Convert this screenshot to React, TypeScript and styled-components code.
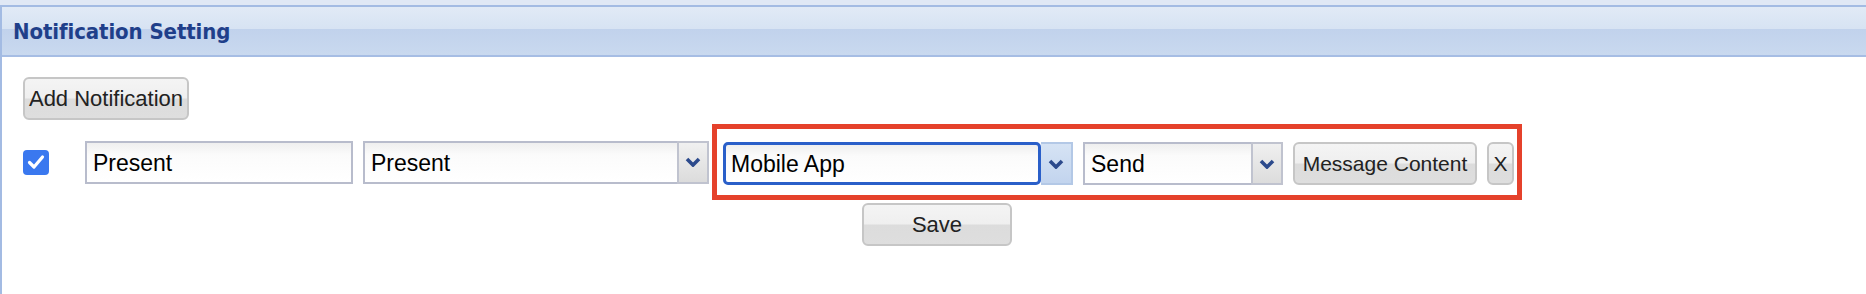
import React from "react";
import styled, { createGlobalStyle } from "styled-components";

const GlobalStyle = createGlobalStyle`
  html, body {
    margin: 0;
    padding: 0;
    background: #ffffff;
  }
  body {
    font-family: "Liberation Sans", Arial, sans-serif;
  }
`;

const Page = styled.div`
  width: 1866px;
  height: 294px;
  box-sizing: border-box;
  padding-top: 5px;
  background: #e0e8f5;
  overflow: hidden;
`;

const Panel = styled.div`
  height: 289px;
  box-sizing: border-box;
  border-top: 2px solid #a3bbe3;
  border-left: 2px solid #a3bbe3;
  background: #ffffff;
`;

const Header = styled.div`
  height: 50px;
  box-sizing: border-box;
  border-bottom: 2px solid #a6bde4;
  background: linear-gradient(
    to bottom,
    #e1eaf6 0%,
    #d7e3f3 45%,
    #c1d2ec 46%,
    #c9d9ef 100%
  );
  display: flex;
  align-items: center;
  padding-left: 11px;
`;

const Title = styled.h2`
  margin: 0;
  font-family: "DejaVu Sans Condensed", "DejaVu Sans", sans-serif;
  font-weight: bold;
  font-size: 22px;
  letter-spacing: -0.1px;
  color: #1f3f8a;
`;

const Body = styled.div`
  padding: 20px 0 0 21px;
  display: flex;
  flex-direction: column;
  align-items: flex-start;
`;

const Button = styled.button<{ $w?: number; $size?: number; $gap?: number }>`
  height: 43px;
  width: ${(p) => (p.$w ? `${p.$w}px` : "auto")};
  margin-left: ${(p) => p.$gap ?? 0}px;
  box-sizing: border-box;
  padding: 0;
  border: 2px solid #c6c6c6;
  border-radius: 6px;
  background: linear-gradient(to bottom, #f4f4f4 0%, #efefef 48%, #dcdcdc 52%, #dedede 100%);
  font-family: "Liberation Sans", Arial, sans-serif;
  font-size: ${(p) => p.$size ?? 21}px;
  color: #222222;
  cursor: pointer;
  white-space: nowrap;
`;

const Row = styled.div`
  margin-top: 4px;
  display: flex;
  align-items: center;
`;

const Check = styled.span`
  width: 26px;
  height: 25px;
  border-radius: 4px;
  background: #3a78ef;
  display: flex;
  align-items: center;
  justify-content: center;
  margin-right: 36px;
`;

const TextBox = styled.div<{ $w: number }>`
  width: ${(p) => p.$w}px;
  height: 43px;
  box-sizing: border-box;
  border: 2px solid #b8bccc;
  background: linear-gradient(to bottom, #efefef 0%, #fbfbfb 30%, #ffffff 100%);
  display: flex;
  align-items: center;
  padding: 2px 0 0 6px;
  font-size: 23px;
  color: #000000;
`;

const SelectBox = styled.div<{ $w: number; $gap: number }>`
  width: ${(p) => p.$w}px;
  height: 43px;
  display: flex;
  margin-left: ${(p) => p.$gap}px;
`;

const SelectValue = styled.div<{ $focus?: boolean }>`
  flex: 1;
  box-sizing: border-box;
  border: ${(p) => (p.$focus ? "3px solid #2a5fc9" : "2px solid #b8bccc")};
  border-right: ${(p) => (p.$focus ? "3px solid #2a5fc9" : "none")};
  border-radius: ${(p) => (p.$focus ? "5px" : "0")};
  background: linear-gradient(to bottom, #efefef 0%, #fbfbfb 30%, #ffffff 100%);
  display: flex;
  align-items: center;
  padding: 2px 0 0 ${(p) => (p.$focus ? "5px" : "6px")};
  font-size: 23px;
  color: #000000;
`;

const SelectArrow = styled.div<{ $focus?: boolean }>`
  width: 32px;
  box-sizing: border-box;
  border: 2px solid ${(p) => (p.$focus ? "#b3c8e6" : "#c0c3cf")};
  border-left: ${(p) => (p.$focus ? "none" : "2px solid #c0c3cf")};
  background: ${(p) =>
    p.$focus
      ? "linear-gradient(to bottom, #d6e3f4 0%, #c2d4ee 100%)"
      : "linear-gradient(to bottom, #f0f0f0 0%, #dcdcdc 100%)"};
  display: flex;
  align-items: center;
  justify-content: center;
`;

const Highlight = styled.div`
  margin-left: 3px;
  height: 76px;
  box-sizing: border-box;
  border: 5px solid #e5412b;
  padding: 13px 3px 10px 6px;
  display: flex;
  align-items: center;
`;

const SaveRow = styled.div`
  align-self: stretch;
  margin-left: -15px;
  margin-top: 3px;
  display: flex;
  justify-content: center;
`;

const Chevron = () => (
  <svg width="16" height="10" viewBox="0 0 16 10">
    <path d="M2 2 L8 8 L14 2" fill="none" stroke="#2c4a8c" strokeWidth="3.6" strokeLinejoin="miter" />
  </svg>
);

const Select: React.FC<{ value: string; width: number; focus?: boolean; gap?: number }> = ({
  value,
  width,
  focus,
  gap = 10,
}) => (
  <SelectBox $w={width} $gap={gap}>
    <SelectValue $focus={focus}>{value}</SelectValue>
    <SelectArrow $focus={focus}>
      <Chevron />
    </SelectArrow>
  </SelectBox>
);

export default function App() {
  return (
    <>
      <GlobalStyle />
      <Page>
        <Panel>
          <Header>
            <Title>Notification Setting</Title>
          </Header>
          <Body>
            <Button $w={166} $size={22}>Add Notification</Button>
            <Row>
              <Check>
                <svg width="18" height="16" viewBox="0 0 18 16">
                  <path d="M2.5 8.5 L7 13 L15.5 3" fill="none" stroke="#ffffff" strokeWidth="3.2" strokeLinecap="round" strokeLinejoin="round" />
                </svg>
              </Check>
              <TextBox $w={268}>Present</TextBox>
              <Select value="Present" width={346} />
              <Highlight>
                <Select value="Mobile App" width={350} focus gap={0} />
                <Select value="Send" width={200} />
                <Button $w={184} $gap={10}>Message Content</Button>
                <Button $w={27} $gap={10}>X</Button>
              </Highlight>
            </Row>
            <SaveRow>
              <Button $w={150} $size={22}>Save</Button>
            </SaveRow>
          </Body>
        </Panel>
      </Page>
    </>
  );
}
